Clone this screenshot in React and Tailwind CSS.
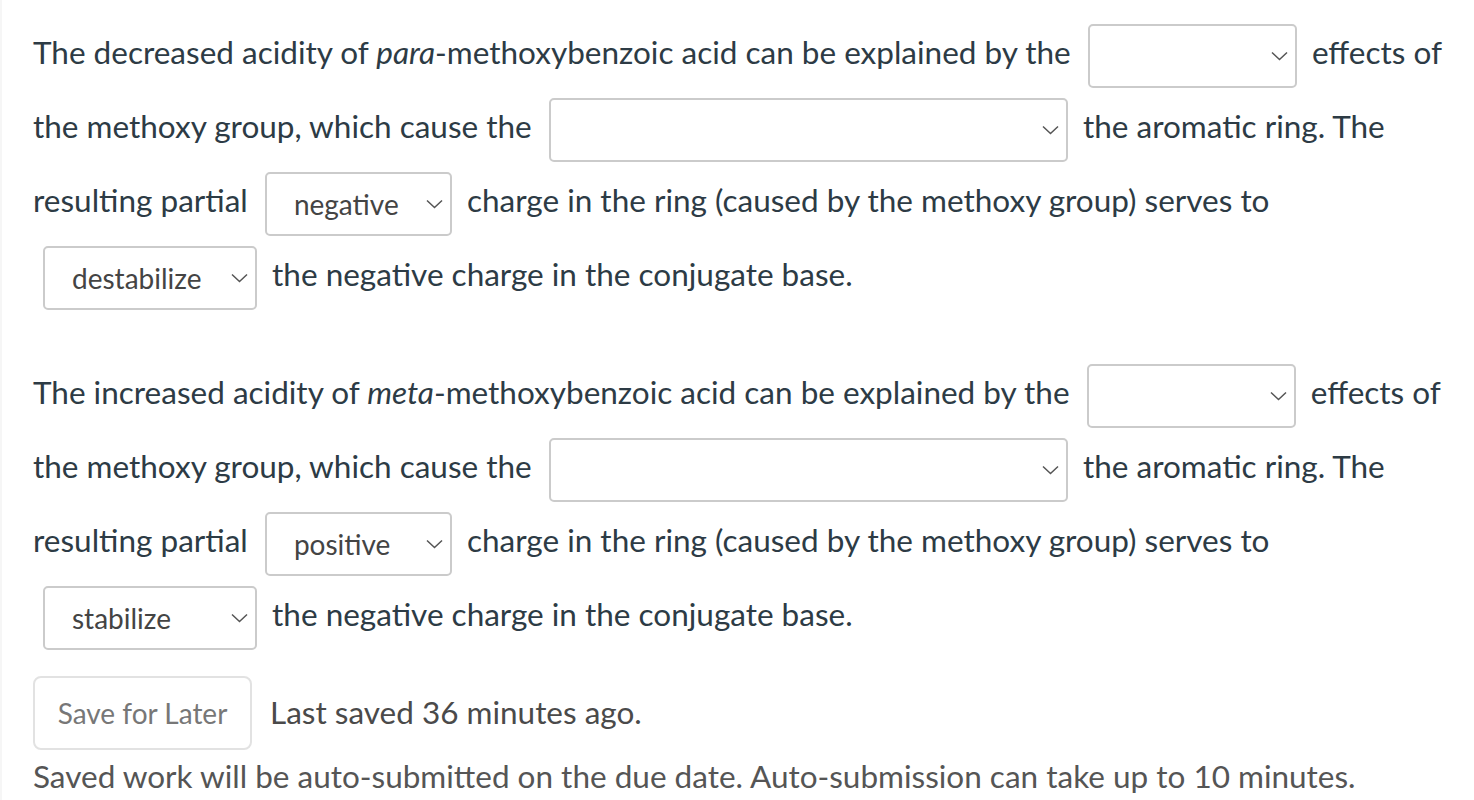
import React from "react";

const Chevron = () => (
  <svg width="17" height="10" viewBox="0 0 17 10" fill="none" className="shrink-0">
    <path d="M1 1.5l7.5 7 7.5-7" stroke="#555" strokeWidth="1.5" />
  </svg>
);

const Dropdown = ({ value, width, ml = "ml-[9px]" }) => (
  <span
    className={`inline-flex h-[64px] items-center justify-between rounded-[5px] border-2 border-[#cbcbcb] bg-white pl-[27px] pr-[7px] ${ml} mr-[7px] text-[28px] text-[#444] ${width}`}
    style={{ verticalAlign: "middle" }}
  >
    <span>{value}</span>
    <Chevron />
  </span>
);

const Block = ({ kind, mode, charge, effect }) => (
  <p className="leading-[74px]">
    The {kind} acidity of <i>{mode}</i>-methoxybenzoic acid can be explained by the{" "}
    <Dropdown value="" width="w-[209px]" />{" "}
    effects of
    <br />
    the methoxy group, which cause the{" "}
    <Dropdown value="" width="w-[519px]" />{" "}
    the aromatic ring. The
    <br />
    resulting partial{" "}
    <Dropdown value={charge} width="w-[187px]" />{" "}
    charge in the ring (caused by the methoxy group) serves to
    <br />
    <Dropdown value={effect} width="w-[214px]" ml="ml-[10px]" />{" "}
    the negative charge in the conjugate base.
  </p>
);

export default function App() {
  return (
    <div
      className="min-h-[800px] border-l-2 border-[#f6f6f6] bg-white pl-[31px] pt-[15px] text-[31.5px] text-[#2d3b45]"
      style={{ fontFamily: "Lato, 'Open Sans', sans-serif" }}
    >
      <Block kind="decreased" mode="para" charge="negative" effect="destabilize" />
      <div className="h-[44px]" />
      <Block kind="increased" mode="meta" charge="positive" effect="stabilize" />
      <div className="mt-[25px] flex items-center gap-[18px]">
        <button className="h-[74px] w-[219px] rounded-[8px] border-2 border-[#e2e2e2] bg-white text-[28px] text-[#777]">
          Save for Later
        </button>
        <span className="text-[#4a4a4a]">Last saved 36 minutes ago.</span>
      </div>
      <div className="mt-[3px] text-[#555]">
        Saved work will be auto-submitted on the due date. Auto-submission can take up to 10 minutes.
      </div>
    </div>
  );
}
